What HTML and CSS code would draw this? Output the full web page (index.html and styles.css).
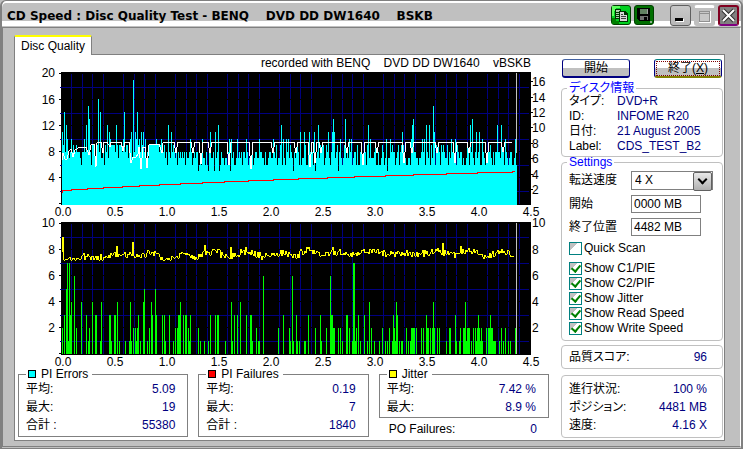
FILE: index.html
```html
<!DOCTYPE html>
<html lang="ja">
<head>
    <meta charset="UTF-8">
    <meta name="viewport" content="width=device-width, initial-scale=1.0">
    <title>CD Speed : Disc Quality Test</title>
    <link rel="stylesheet" href="styles.css">
</head>
<body>
    <div class="window">
        <header class="titlebar">
            <h1>CD Speed : Disc Quality Test - BENQ    DVD DD DW1640    BSKB</h1>
            <div class="tools">
                <button class="tool copy" aria-label="Copy">
                    <svg viewBox="0 0 18 18" width="18" height="18" shape-rendering="crispEdges">
                        <path d="M0 0h8v2H4v3H2v5H0z" fill="#60ff60"/>
                        <path d="M0 12h4v3h3v3H0z" fill="#008000"/>
                        <path d="M3 3h6v10H3z" fill="#003000"/>
                        <path d="M4 4h4v8H4z" fill="#b0d0b0"/>
                        <path d="M4 6h4v1H4zM4 8h4v1H4zM4 10h4v1H4z" fill="#004000"/>
                        <path d="M7 5h6l3 3v8H7z" fill="#003000"/>
                        <path d="M8 6h4v3h3v6H8z" fill="#d8d8d8"/>
                        <path d="M9 8h2v1H9zM9 10h5v1H9zM9 12h5v1H9z" fill="#404040"/>
                    </svg>
                </button>
                <button class="tool save" aria-label="Save">
                    <svg viewBox="0 0 18 18" width="18" height="18" shape-rendering="crispEdges">
                        <path d="M2 2h13v13H4l-2-2z" fill="#000"/>
                        <path d="M5 3h7v5H5z" fill="#608060"/>
                        <path d="M12 3h1v5h-1z" fill="#a0a0a0"/>
                        <path d="M5 10h8v4H5z" fill="#707070"/>
                        <path d="M9 11h3v3H9z" fill="#000"/>
                        <path d="M15 15h2v2h-2z" fill="#90b090"/>
                    </svg>
                </button>
            </div>
            <div class="controls">
                <button class="control min" aria-label="Minimize">
                    <svg viewBox="0 0 19 19" width="19" height="19" shape-rendering="crispEdges"><path d="M5 13h8v3H5z" fill="#fff"/><path d="M4 12h8v3H4z" fill="#000"/></svg>
                </button>
                <button class="control max" aria-label="Maximize">
                    <svg viewBox="0 0 19 19" width="19" height="19" shape-rendering="crispEdges"><path d="M4 4h12v12H4z" fill="#fff"/><path d="M4 4h11v11H4z" fill="#909090"/><path d="M5 5h9v1H5zM5 7h9v7H5z" fill="#c8c8c8"/></svg>
                </button>
                <button class="control close" aria-label="Close">
                    <svg viewBox="0 0 17 17" width="17" height="17"><path d="M3 3l11 11M14 3L3 14" stroke="#303030" stroke-width="4"/><path d="M3 3l11 11M14 3L3 14" stroke="#fff" stroke-width="2"/></svg>
                </button>
            </div>
        </header>
        <div class="client">
            <button class="tab">Disc Quality</button>
            <div class="panel">
                <main class="main">
                    <p class="recorded">recorded with BENQ    DVD DD DW1640    vBSKB</p>
                    <svg class="chart" id="errors" viewBox="0 0 531 150"></svg>
                    <svg class="chart" id="failures" viewBox="0 0 531 150"></svg>
                    <div class="stats">
                        <fieldset class="stat">
                            <legend><span class="swatch cyan"></span>PI Errors</legend>
                            <dl>
                                <div><dt>平均:</dt><dd>5.09</dd></div>
                                <div><dt>最大:</dt><dd>19</dd></div>
                                <div><dt>合計 :</dt><dd>55380</dd></div>
                            </dl>
                        </fieldset>
                        <fieldset class="stat">
                            <legend><span class="swatch red"></span>PI Failures</legend>
                            <dl>
                                <div><dt>平均:</dt><dd>0.19</dd></div>
                                <div><dt>最大:</dt><dd>7</dd></div>
                                <div><dt>合計 :</dt><dd>1840</dd></div>
                            </dl>
                        </fieldset>
                        <div class="stat-col">
                            <fieldset class="stat">
                                <legend><span class="swatch yellow"></span>Jitter</legend>
                                <dl>
                                    <div><dt>平均:</dt><dd>7.42 %</dd></div>
                                    <div><dt>最大:</dt><dd>8.9 %</dd></div>
                                </dl>
                            </fieldset>
                            <dl class="po">
                                <div><dt>PO Failures:</dt><dd>0</dd></div>
                            </dl>
                        </div>
                    </div>
                </main>
                <aside class="side">
                    <div class="actions">
                        <button class="btn">開始</button>
                        <button class="btn focused">終了(<u>X</u>)</button>
                    </div>
                    <fieldset class="group info">
                        <legend>ディスク情報</legend>
                        <dl>
                            <div><dt>タイプ:</dt><dd>DVD+R</dd></div>
                            <div><dt>ID:</dt><dd>INFOME R20</dd></div>
                            <div><dt>日付:</dt><dd>21 August 2005</dd></div>
                            <div><dt>Label:</dt><dd>CDS_TEST_B2</dd></div>
                        </dl>
                    </fieldset>
                    <fieldset class="group settings">
                        <legend>Settings</legend>
                        <div class="field">
                            <label for="speed">転送速度</label>
                            <div class="select"><select id="speed"><option>4 X</option></select></div>
                        </div>
                        <div class="field">
                            <label for="start">開始</label>
                            <input type="text" id="start" value="0000 MB">
                        </div>
                        <div class="field">
                            <label for="end">終了位置</label>
                            <input type="text" id="end" value="4482 MB">
                        </div>
                        <div class="checks">
                            <label class="quick"><input type="checkbox">Quick Scan</label>
                            <label><input type="checkbox" checked>Show C1/PIE</label>
                            <label><input type="checkbox" checked>Show C2/PIF</label>
                            <label><input type="checkbox" checked>Show Jitter</label>
                            <label><input type="checkbox" checked>Show Read Speed</label>
                            <label><input type="checkbox" checked>Show Write Speed</label>
                        </div>
                    </fieldset>
                    <dl class="group box score">
                        <div><dt>品質スコア:</dt><dd>96</dd></div>
                    </dl>
                    <dl class="group box">
                        <div><dt>進行状況:</dt><dd>100 %</dd></div>
                        <div><dt>ポジション:</dt><dd>4481 MB</dd></div>
                        <div><dt>速度:</dt><dd>4.16 X</dd></div>
                    </dl>
                </aside>
            </div>
        </div>
    </div>
    <script src="charts.js"></script>
</body>
</html>
```

FILE: styles.css
```css
* {
    box-sizing: border-box;
}
body {
    margin: 0;
    background: #c0c0c0;
    color: #000;
    font: 12px/15px "Liberation Sans", "Noto Sans CJK JP", sans-serif;
    font-feature-settings: "palt";
}
button, input, select {
    font: inherit;
    color: inherit;
}
dl, dd, p, h1 {
    margin: 0;
}
fieldset {
    margin: 0;
    min-width: 0;
}
dl div {
    display: flex;
    justify-content: space-between;
}
dd {
    color: #000080;
}

/* window frame */
.window {
    display: flex;
    flex-direction: column;
    min-height: 100vh;
    border: 2px solid #808080;
    border-top-width: 1px;
    border-bottom-width: 1px;
    border-radius: 6px 6px 0 0;
    box-shadow: inset 0 2px 0 #fff;
}
.titlebar {
    display: flex;
    align-items: flex-start;
    height: 26px;
    padding: 4px 2px 0 5px;
    background: linear-gradient(transparent 20px, #fff 20px, #fff 25px, transparent 25px);
}
.titlebar h1 {
    flex: 1;
    font: bold 12px/22px "DejaVu Sans", sans-serif;
    white-space: pre;
}
.tools, .controls {
    display: flex;
    gap: 3px;
}
.tools {
    margin-right: 16px;
}
.tool, .control {
    display: flex;
    justify-content: center;
    align-items: center;
    width: 20px;
    height: 20px;
    padding: 0;
    border: 1px solid #004000;
    border-radius: 3px;
}
.controls .control {
    width: 21px;
    height: 21px;
    border: 1px solid #606060;
    background: linear-gradient(#c8c8c8, #b8b8b8);
}
.copy {
    background: #00d020;
}
.save {
    background: #007000;
}
.controls .max {
    border-color: #c0c0c0;
    background: #c0c0c0;
    border-top: 3px solid #fff;
}
.controls .close {
    border: 2px solid #800020;
    border-bottom-color: #800080;
    background: #808080;
}

.client {
    flex: 1;
    display: flex;
    flex-direction: column;
    align-items: flex-start;
    margin-bottom: 1px;
    padding: 7px 15px 5px 11px;
    border: 1px solid #808080;
    border-right-color: #fff;
}
.tab {
    height: 20px;
    padding: 0 6px;
    border: 1px solid #808080;
    border-top: 2px solid #ff0;
    border-bottom: 0;
    border-radius: 2px 2px 0 0;
    background: #fff;
    position: relative;
    z-index: 1;
}
.panel {
    flex: 1;
    align-self: stretch;
    display: flex;
    gap: 12px;
    margin-top: -1px;
    padding: 2px 1px 2px 3px;
    border: 1px solid #808080;
    background: #fff;
}
.main {
    flex: 1;
    min-width: 0;
}
.recorded {
    padding-right: 18px;
    line-height: 13px;
    text-align: right;
    white-space: pre;
}
.chart {
    display: block;
    width: 100%;
    overflow: visible;
}
.chart text {
    fill: #000;
}

.stats {
    display: grid;
    grid-template-columns: repeat(3, 1fr);
    gap: 10px;
    margin-top: -2px;
}
.stat {
    padding: 0 12px 1px 7px;
    border: 1px solid #808080;
}
.stat legend {
    display: flex;
    align-items: center;
    gap: 5px;
    padding: 0 4px 0 2px;
    line-height: 12px;
}
.stat dl div {
    line-height: 18px;
}
.swatch {
    width: 8px;
    height: 8px;
    border: 1px solid #000;
}
.cyan {
    background: #0ff;
}
.red {
    background: #f00;
}
.yellow {
    background: #ff0;
}
.po {
    padding: 4px 12px 0 10px;
}

/* right column */
.side {
    width: 162px;
}
.actions {
    display: flex;
    justify-content: space-between;
    margin: 2px 1px 3px;
}
.btn {
    width: 68px;
    height: 19px;
    padding: 0;
    border: 1px solid #000080;
    border-top-color: #4060a0;
    border-bottom-width: 2px;
    border-radius: 3px;
    background: linear-gradient(#fff 50%, #c0c0c0 50%);
    line-height: 15px;
}
.btn.focused {
    outline: 1px dotted #800000;
    outline-offset: -3px;
    border-color: #008080 #000080 #808000;
}
.group {
    border: 1px solid #c0c0c0;
    border-radius: 4px;
}
.group legend {
    padding: 0 2px;
    margin-left: -2px;
    color: #00f;
    line-height: 14px;
}
.info {
    padding: 0 7px 2px;
}
.info dl {
    margin-top: -1px;
}
.info dl div {
    justify-content: flex-start;
}
.info dt {
    width: 48px;
}
.settings {
    margin-top: -2px;
    padding: 2px 7px 4px;
}
.field {
    display: flex;
    align-items: center;
    margin-bottom: 5px;
}
.field label {
    width: 62px;
}
.field input {
    width: 70px;
    height: 18px;
    padding: 0 2px;
    border: 1px solid #808080;
}
.select {
    position: relative;
    width: 82px;
}
.select select {
    display: block;
    width: 100%;
    height: 19px;
    padding: 0 3px;
    border: 1px solid #808080;
    border-radius: 0;
    background: #fff;
    appearance: none;
}
.select::before {
    content: "";
    position: absolute;
    top: 1px;
    right: 1px;
    width: 17px;
    height: 17px;
    border: 1px solid #606060;
    border-radius: 2px;
    background: linear-gradient(#e8e8e8, #b0b0b0);
    pointer-events: none;
}
.select::after {
    content: "";
    position: absolute;
    top: 5px;
    right: 7px;
    width: 5px;
    height: 5px;
    border: solid #000;
    border-width: 0 2px 2px 0;
    transform: rotate(45deg);
    pointer-events: none;
}
.checks {
    display: flex;
    flex-direction: column;
}
.checks label {
    display: flex;
    align-items: center;
    gap: 2px;
}
.checks .quick {
    margin-bottom: 5px;
}
.checks input {
    display: flex;
    justify-content: center;
    width: 13px;
    height: 13px;
    margin: 0;
    border: 1px solid #008080;
    background: linear-gradient(135deg, #c0c0c0 35%, #fff 35%);
    appearance: none;
}
.checks input:checked::after {
    content: "";
    width: 4px;
    height: 7px;
    border: solid #008000;
    border-width: 0 2px 2px 0;
    transform: rotate(40deg);
}
.box {
    margin-top: 6px;
    padding: 4px 15px 3px 7px;
}
.box div {
    line-height: 18px;
}
.score {
    margin-top: 4px;
    padding: 2px 15px 2px 7px;
}
```

FILE: charts.js
```js
const NS = 'http://www.w3.org/2000/svg';
const W = 470;
const H = 133;
const STEP = 52;    // pixels for 0.5 GB

// PI errors, one character for each column, base 36
const pieBase =
    '9998988787898898887688988898869997999897796989789999989979' +
    '9989789978997889799788968978799999999998989897868876898786878' +
    '7878687787867878856768776865877785678756877677686587866777' +
    '8786887786777867887778877686678877687967798697668779875878' +
    '9867677896688888695788798996798876896778958876796787786678' +
    '8696689668869678777896686679867957788988678968989876677688' +
    '7887767786886687669788698986989877968788978698788676679867' +
    '887686789668876778897686888887788668767886679688768878866788';
const piePeaks = '1:b 3:e 5:c 6:a 10:a 23:a 25:c 27:f 28:d 37:g 39:e 46:c 48:b 49:a 55:c 62:a 63:e 69:a 70:b ' +
    '72:j 74:b 75:a 76:e 78:a 80:b 82:b 84:a 95:a 100:a 107:c 110:b 129:a 141:a 149:b 154:b 157:c 168:a 170:a 176:a ' +
    '185:a 198:a 212:a 220:c 222:a 225:a 227:a 239:b 243:b 248:b 253:b 257:c 267:b 271:b 272:d 273:b 279:a 284:d ' +
    '288:a 290:a 307:c 309:a 325:a 329:a 341:b 350:a 351:c 352:d 361:a 363:a 365:c 368:c 372:f 373:b 390:a 394:a ' +
    '409:c 411:d 415:b 418:b 421:a 436:c 440:c 444:a 454:a';
const pifBars = '1:2 3:3 5:5 6:7 7:1 8:7 9:3 10:4 13:6 15:2 20:4 25:3 27:1 28:2 31:4 34:3 35:3 39:1 40:4 48:3 49:3 ' +
    '50:1 53:3 54:3 56:4 58:1 64:1 68:1 69:4 70:1 72:2 74:2 75:1 76:2 77:3 79:1 82:4 83:5 86:1 88:2 90:4 91:3 94:5 ' +
    '95:3 101:3 103:3 104:1 108:3 112:1 114:2 116:2 117:3 118:3 119:4 122:3 124:3 125:3 127:2 128:1 129:3 137:2 ' +
    '139:1 143:1 147:1 149:3 154:3 156:3 157:3 164:1 170:4 171:1 173:3 176:3 179:4 185:3 189:3 190:3 191:1 195:2 ' +
    '197:1 198:1 202:6 217:2 222:3 228:2 229:1 231:6 232:1 235:3 236:1 238:1 243:1 244:1 247:3 254:2 259:3 260:1 ' +
    '265:2 269:6 270:3 271:3 272:2 273:2 277:2 279:2 281:1 285:3 286:3 288:2 291:1 292:7 293:7 294:1 295:2 297:3 ' +
    '299:1 303:3 306:1 308:4 310:2 313:1 318:1 321:2 324:1 326:1 328:2 331:1 332:3 333:2 334:1 335:4 336:3 338:1 ' +
    '340:1 341:1 345:2 347:1 349:1 350:2 351:2 352:2 353:2 355:2 360:2 362:2 365:3 366:2 367:2 369:2 371:2 372:4 ' +
    '373:2 376:2 378:2 385:1 388:2 389:2 394:3 395:1 398:1 399:2 402:2 403:2 404:4 405:1 406:2 407:2 408:2 410:1 ' +
    '412:2 414:2 415:1 416:2 417:3 418:2 419:1 420:2 421:1 425:2 427:2 428:2 429:3 430:2 431:2 432:1 433:1 434:1 ' +
    '438:1 440:2 442:1 444:2 447:1 449:1 454:2';

function add(parent, name, attrs, text) {
    const el = document.createElementNS(NS, name);
    for (const key in attrs) el.setAttribute(key, attrs[key]);
    if (text !== undefined) el.textContent = text;
    parent.appendChild(el);
    return el;
}

function pairs(str) {
    return str.split(' ').map(p => {
        const [x, v] = p.split(':');
        return [Number(x), parseInt(v, 36)];
    });
}

function drawFrame(id, leftLabels, rightLabels) {
    const svg = document.getElementById(id);
    for (let i = 0; i <= 9; i++) {
        add(svg, 'text', { x: 45 + i * STEP, y: 146, 'text-anchor': 'middle' }, (i / 2).toFixed(1));
    }
    leftLabels.forEach(([v, y]) => {
        add(svg, 'text', { x: 37, y: y + 6, 'text-anchor': 'end' }, v);
    });
    rightLabels.forEach(([v, y]) => {
        add(svg, 'text', { x: 514, y: y + 6 }, v);
    });
    const plot = add(svg, 'g', { transform: 'translate(43 2)', 'shape-rendering': 'crispEdges' });
    add(plot, 'rect', { width: W, height: H });
    let grid = '';
    for (let i = 1; i < 45; i++) {
        if (i % 5) grid += `M${Math.round(i * 10.4)} 2h1V${H - 1}h-1z`;
    }
    add(plot, 'path', { d: grid, fill: '#000080' });
    // the major divisions stay black
    [27, 53, 79, 105].forEach(y => add(plot, 'rect', { y: y, width: W, height: 1 }));
    let ticks = '';
    for (let i = 0; i < 5; i++) {
        add(plot, 'rect', { x: -1, y: 15 + i * 26, width: W - 1, height: 1, fill: '#000080' });
        ticks += `M-2 ${1 + i * 26}h2v1h-2z`;
    }
    ticks += 'M-2 131h2v1h-2z';
    if (id === 'errors') {
        rightLabels.forEach(([v, y]) => ticks += `M${W} ${y - 1}h2v1h-2z`);
    }
    add(plot, 'path', { d: ticks });
    return plot;
}

function drawErrors() {
    const plot = drawFrame('errors',
        [[20, 1], [16, 28], [12, 54], [8, 80], [4, 106]],
        [[16, 10], [14, 26], [12, 41], [10, 56], [8, 72], [6, 87], [4, 103], [2, 118]]);
    const cols = [...pieBase].slice(0, 455).map(c => parseInt(c, 36));
    pairs(piePeaks).forEach(([x, v]) => cols[x - 1] = v);
    let d = '';
    cols.forEach((v, i) => d += `M${i + 1} ${H}V${Math.round(132 - v * 6.55)}h1V${H}z`);
    add(plot, 'path', { d: d, fill: '#0ff' });

    // read speed, with short dips
    let line = '1,88 2,81 4,87 6,87 8,79 10,77 12,85 14,78 19,75 25,75 28,83 30,73 33,72 35,95 36,71 40,70 42,81 43,70 ' +
        '46,70 49,75 50,70 60,70 62,79 64,70 68,70 70,91 72,85 75,85 77,82 78,75 80,97 82,75 84,75 86,96 88,73 98,72 ' +
        '101,81 102,71 105,70';
    const dips = [[115, 81], [132, 81], [140, 92], [149, 81], [168, 93], [190, 97], [212, 81], [235, 81], [249, 95],
        [254, 91], [260, 81], [286, 81], [302, 93], [316, 81], [343, 91], [351, 81], [376, 81], [394, 91], [408, 81],
        [426, 91], [442, 80]];
    dips.forEach(([x, y]) => line += ` ${x - 2},70 ${x},${y} ${x + 2},70`);
    add(plot, 'polyline', { points: line + ' 451,70', fill: 'none', stroke: '#fff' });

    // write speed
    const steps = [10, 26, 42, 61, 78, 98, 119, 141, 163, 187, 212, 237, 266, 293, 324, 352, 385, 416, 451];
    let speed = 'M1 121V118.5';
    steps.forEach((x, i) => speed += `H${x}V${117.5 - i}`);
    add(plot, 'path', { d: speed + 'H454', fill: 'none', stroke: '#f00' });
    add(plot, 'rect', { x: 455, y: 1, width: 1, height: 80, fill: '#c0c0c0' });
}

function drawFailures() {
    const plot = drawFrame('failures',
        [[10, 1], [8, 28], [6, 54], [4, 80], [2, 106]],
        [[10, 1], [8, 28], [6, 54], [4, 80], [2, 106]]);
    let d = '';
    pairs(pifBars).forEach(([x, v]) => d += `M${x} ${H - 1}V${132 - v * 13}h1V${H - 1}z`);
    add(plot, 'path', { d: d, fill: '#0f0' });

    // jitter wanders round a slowly changing mean
    const mean = [36, 36, 34, 32, 33, 36, 34, 31, 33, 31, 33, 32, 30, 31, 32, 30, 31, 32, 30, 31, 30, 32, 31, 30];
    const peaks = { 2: 15, 56: 24, 72: 20, 144: 23, 170: 25, 185: 25, 272: 25, 382: 21, 400: 24 };
    let line = '1,30 1,15';
    for (let x = 2; x < 454; x++) {
        const hash = Math.sin(x * 127.1) * 43758.5;
        const noise = hash - Math.floor(hash) - 0.5;
        const wave = Math.sin(x / 5.1) * 1.5;
        const y = peaks[x] || Math.min(38, mean[Math.floor(x / 20)] + wave + noise * 7);
        line += ` ${x},${Math.round(y)}`;
    }
    add(plot, 'polyline', { points: line, fill: 'none', stroke: '#ff0' });
    add(plot, 'rect', { x: 455, y: 1, width: 1, height: H - 2, fill: '#c0c0c0' });
}

drawErrors();
drawFailures();
```
